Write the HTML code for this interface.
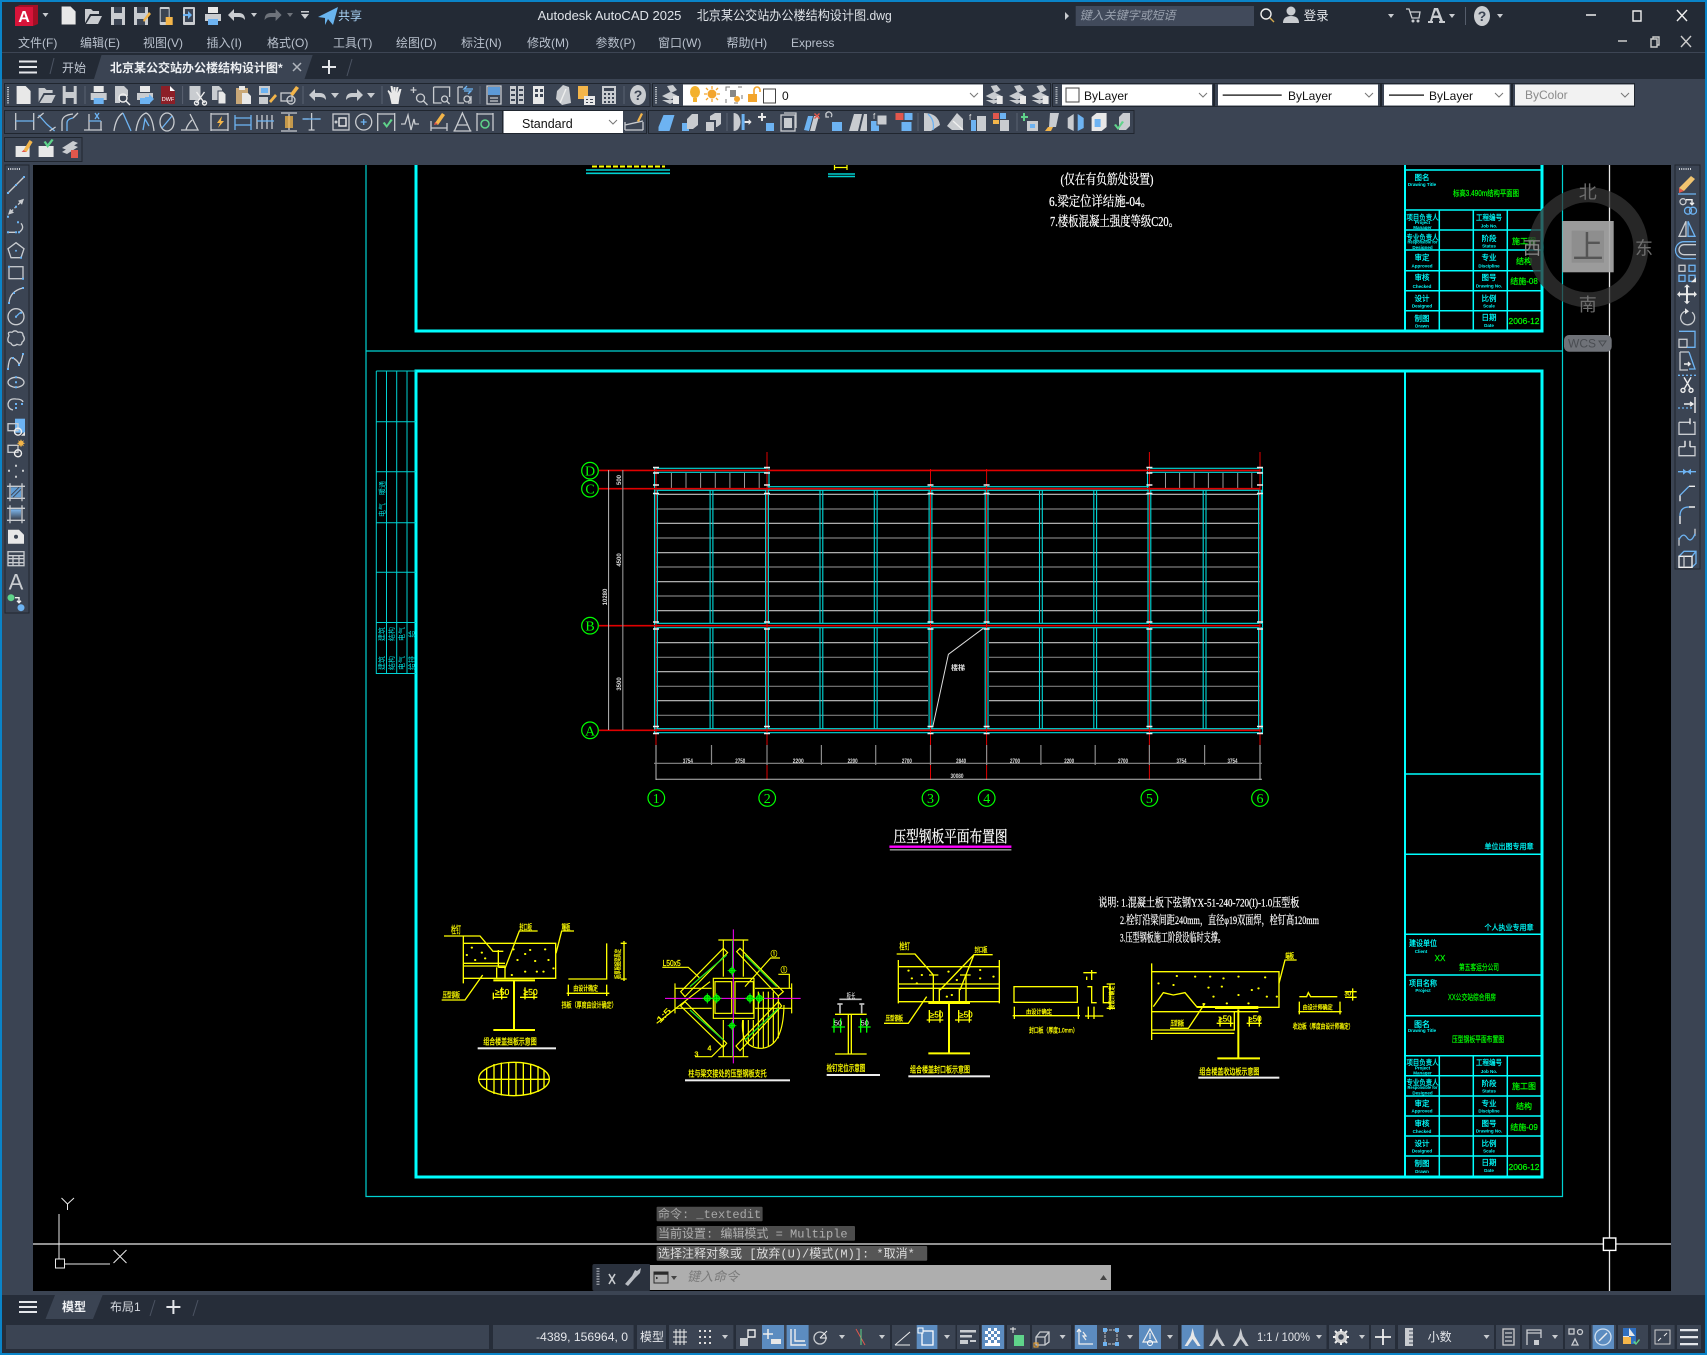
<!DOCTYPE html>
<html><head><meta charset="utf-8"><title>AutoCAD</title>
<style>
html,body{margin:0;padding:0;background:#000;width:1707px;height:1355px;overflow:hidden}
svg{display:block}
text{font-family:"Liberation Sans","Noto Sans CJK SC",sans-serif}
.mn{font-family:"Liberation Mono","Noto Sans CJK SC",monospace;font-size:12px}
.sf{font-family:"Liberation Serif","Noto Serif CJK SC",serif}
.f{fill:#c9ccd0}.w{fill:#e8e8e8}.bl{fill:#6db3f2}.o{fill:#f3b54a}.d{fill:#3b4453}.rd{fill:#e2574c}.gn{fill:#5fd38a}
.l{fill:none;stroke:#c9ccd0;stroke-width:1.3}.lb{fill:none;stroke:#6db3f2;stroke-width:1.3}.lw{fill:none;stroke:#eee;stroke-width:1.4}
.tb{fill:#3b4453;stroke:#20262f;stroke-width:1}
.mu{font-size:12px;fill:#b9c1cd}
.tt{fill:#0ff;font-size:7.5px;text-anchor:middle;stroke:#0ff;stroke-width:.2}
.te{fill:#0ff;font-size:4.5px;text-anchor:middle;font-weight:bold}
.tg{fill:#0f0;font-size:8px;text-anchor:middle;stroke:#0f0;stroke-width:.2}
.y{fill:#ff0;stroke:#ff0;stroke-width:.7}
.ys{fill:none;stroke:#ff0;stroke-width:4}
.dm{fill:#ddd;font-size:6px;text-anchor:middle;font-weight:bold}
.grn{fill:none;stroke:#0f0;stroke-width:1.2}
.gt{fill:#0f0;font-size:14px;text-anchor:middle}
.nt{stroke:#fff;stroke-width:.25}
</style></head>
<body>
<svg xmlns="http://www.w3.org/2000/svg" width="1707" height="1355" viewBox="0 0 1707 1355">
<defs>
<g id="new"><path class="w" d="M-7-9h9l5 5v13H-7z"/></g>
<g id="open"><path class="f" d="M-8-7h6l2 2h6v3H-3l-5 9zM-2 0H9L5 8H-7z"/></g>
<g id="save"><rect class="f" x="-7" y="-9" width="14" height="18"/><rect class="d" x="-4" y="-9" width="8" height="6"/><rect class="d" x="-4" y="3" width="8" height="6"/></g>
<g id="sas"><use href="#save"/><path class="o" d="M2 4L8-4l2 2-7 8z"/></g>
<g id="pho"><rect class="f" x="-6" y="-9" width="10" height="18" rx="1"/><rect class="d" x="-5" y="-7" width="8" height="13"/><path class="o" d="M0 1h7v8H0z"/></g>
<g id="pho2"><rect class="f" x="-6" y="-9" width="12" height="18" rx="1"/><rect class="d" x="-4" y="-7" width="8" height="13"/><path class="bl" d="M-6-2h5v-3l4 4-4 4V0h-5z"/></g>
<g id="prt"><rect class="w" x="-5" y="-9" width="10" height="6"/><rect class="f" x="-8" y="-2" width="16" height="7"/><rect class="bl" x="-5" y="3" width="10" height="6"/></g>
<g id="prv"><path class="f" d="M-7-9h9l4 4v6H-7z M-7 1h5v7h-5z"/><circle class="lw" cx="1" cy="3" r="4"/><path class="lw" d="M4 6l4 4"/></g>
<g id="pub"><use href="#prt"/><path class="bl" d="M0 2h4v-3l5 5-5 5V6H0z"/></g>
<g id="dwf"><path fill="#8c1f27" d="M-7-9h9l5 5v13H-7z"/><path fill="#fff" d="M2-9l5 5H2z"/><text x="0" y="6" font-size="5.5" fill="#fff" text-anchor="middle">DWF</text></g>
<g id="cut"><rect class="f" x="-8" y="-9" width="11" height="14"/><path class="lw" d="M-1-3L7 8M7-3L-1 8"/><circle class="lw" cx="-1" cy="8" r="2"/><circle class="lw" cx="7" cy="8" r="2"/></g>
<g id="cpy"><path class="f" d="M-7-9h7l3 3v11H-7z"/><path class="w" d="M-1-4h5l3 3v10H-1z" stroke="#3b4453"/></g>
<g id="pst"><path fill="#c9a878" d="M-7-7h12v16H-7z"/><rect class="w" x="-4" y="-9" width="6" height="4"/><path class="w" d="M-1-2h6l3 3v8H-1z"/></g>
<g id="mat"><rect class="f" x="-8" y="-9" width="11" height="9"/><rect class="bl" x="-6" y="-7" width="7" height="5"/><path class="f" d="M-8 2h9v7h-9z"/><path class="o" d="M2 6L8-1l2 2-6 7z"/></g>
<g id="mp"><rect class="l" x="-8" y="-2" width="11" height="8"/><circle class="l" cx="2" cy="5" r="4"/><path class="o" d="M1-1L7-9l3 2-6 8z"/></g>
<g id="und"><path class="f" d="M-9 0l6-6v4h5q6 0 6 7-2-3-6-3h-5V6z"/></g>
<g id="red"><path class="f" d="M9 0L3-6v4h-5q-6 0-6 7 2-3 6-3h5V6z"/></g>
<path id="dn" fill="#c9ccd0" d="M-4-2h8l-4 5z"/>
<path id="dnn" fill="#c9ccd0" d="M-3-2h6l-3 4z"/>
<g id="pan"><path class="w" d="M-6 0l-2-4 1-1 3 3-1-7h2l1 5V-8h2v5l1-5h2l-1 6 2-4h2l-2 8-1 7h-7z"/></g>
<g id="zp"><path class="l" d="M-8-5h6M-5-8v6"/><circle class="l" cx="2" cy="3" r="4"/><path class="l" d="M5 6l4 4"/></g>
<g id="zw"><path class="l" d="M-8-8H8V2M-8-8V8H0"/><circle class="l" cx="3" cy="4" r="3"/><path class="l" d="M5 6l3 3"/></g>
<g id="zb"><path class="l" d="M-7-8h5M-7-8V8h6M6 1v7h-3"/><path class="lb" d="M8-6H-1l3-3M-1-4h7l-3 3"/><circle class="l" cx="2" cy="4" r="3"/></g>
<g id="prop"><rect x="-6" y="-8" width="12" height="8" fill="#5c9ad8"/><rect class="l" x="-7" y="-9" width="14" height="18"/><path class="l" d="M-4 3H4M-4 6H4"/></g>
<g id="dc"><path class="f" d="M-7-9H-1V9H-7zM1-9H7V9H1z"/><path class="d" d="M-6-6h4v2h-4zM-6-1h4v2h-4zM-6 4h4v2h-4zM2-6h4v2H2zM2-1h4v2H2zM2 4h4v2H2z"/></g>
<g id="tp"><path class="w" d="M-7-9H4v18H-7z"/><path class="d" d="M-5-6h3v3h-3zM0-6h3v3H0zM-5-1h3v3h-3zM0-1h3v3H0z"/></g>
<g id="ss"><path class="f" d="M-6-4L0-10l6 2L8 8-1 10-7 4z"/><path class="lw" d="M-3 8L3-6"/></g>
<g id="mk"><path class="o" d="M-8-9H2V4H-8z"/><rect class="w" x="-2" y="1" width="11" height="9"/><path class="d" d="M0 4h2v1H0zM4 4h3v1H4zM0 7h2v1H0zM4 7h3v1H4z"/></g>
<g id="calc"><rect class="f" x="-7" y="-9" width="14" height="18"/><path class="d" d="M-5-7H5v3H-5zM-5-2h2v2h-2zM-1-2h2v2h-2zM3-2h2v2H3zM-5 2h2v2h-2zM-1 2h2v2h-2zM3 2h2v2H3zM-5 6h2v2h-2zM-1 6h2v2h-2zM3 6h2v2H3z"/></g>
<g id="q"><ellipse class="f" cx="0" cy="0" rx="8" ry="10"/><text x="0" y="5" font-size="14" font-weight="bold" text-anchor="middle" fill="#3b4453">?</text></g>
<g id="lyr"><path class="f" d="M-8 1L0-3l8 4-8 4zM-8 5l8 4 8-4"/><path class="f" d="M-3-9l6-1 4 5-6 3z"/><rect class="w" x="3" y="1" width="6" height="8"/></g>
<g id="d1"><path class="l" d="M-9-9V8M9-9V8"/><path class="lb" d="M-9-1H9"/></g>
<g id="d2"><path class="lb" d="M-8-7L0 2M8 9L0 2"/><path class="l" d="M-9-4L-3-9M3 9L9 5"/></g>
<g id="d3"><path class="l" d="M-8 9V0Q-8-7 3-8"/><path class="lb" d="M-3 9V1Q-3-3 3-4"/><path class="l" d="M8-9L3-4"/></g>
<g id="d4"><path class="l" d="M-9 8H9M-4 8V-8M8 8V-1"/><path class="lb" d="M-4-1H8M2-9l4 6M6-9l-4 6"/></g>
<g id="d5"><path class="l" d="M-8 9Q-6-5 1-9"/><path class="lb" d="M1-9L9 9"/></g>
<g id="d6"><path class="l" d="M-9 9Q-7-6 1-9Q7-7 9 9"/><path class="lb" d="M-2 8L0-3 4 4"/></g>
<g id="d7"><ellipse class="l" cx="0" cy="0" rx="7" ry="9"/><path class="lb" d="M-5 6L5-6"/></g>
<g id="d8"><path class="l" d="M-9 8H8L0-8M-4 8Q-3 3 2-2"/></g>
<g id="d9"><path class="l" d="M-9-9V9M8-9V9M-9-8H8M-9 8H8"/><path class="o" d="M2-6L-3 1h3L-2 6 4-1H1z"/></g>
<g id="d10"><path class="lb" d="M-8-7V8M8-7V8M-8-4H8"/><path class="lb" d="M-8 3H8"/></g>
<g id="d11"><path class="l" d="M-9-7V7M-4-7V7M1-7V7M6-7V7"/><path class="lb" d="M-9-1H8"/></g>
<g id="d12"><path class="l" d="M-8-9H8M-8 9H8M0-8V8"/><path class="o" d="M-4-6H4V6H-4z" opacity=".75"/></g>
<g id="d13"><path class="l" d="M-9-3H-3M3-3H9M0-9V8M-3 8H3"/><path class="lb" d="M-9-3h18"/></g>
<g id="d14"><rect class="l" x="-8" y="-8" width="16" height="16"/><rect class="lw" x="-2" y="-4" width="7" height="8"/><circle class="f" cx="-5" cy="0" r="1.5"/></g>
<g id="d15"><circle class="l" cx="0" cy="0" r="8"/><path class="lb" d="M-3 0H3M0-3V3"/></g>
<g id="d16"><path class="l" d="M-9-9V9M8-9V9M-9-8H8"/><path class="gn" d="M-4 1l2-1 2 3 4-6 2 1-6 8z"/></g>
<g id="d17"><path class="l" d="M-9 2H-5L-2-7 1 8 4-3 5 2H9"/></g>
<g id="d18"><path class="l" d="M-8-1V9M8 1V9M-8 6H8"/><path class="o" d="M-4 1L3-9l3 2-7 10z"/><path class="rd" d="M-5 3l1-3 3 2z"/></g>
<g id="d19"><path class="l" d="M-8 9L0-9 8 9M-5 3H5M-9 9H9"/></g>
<g id="d20"><path class="l" d="M-8-9V9M8-9V9M-8-8H8"/><circle fill="none" stroke="#5fd38a" stroke-width="1.5" cx="0" cy="2" r="4"/></g>
<g id="d21"><path class="l" d="M-9 8H9M-9 8V0M9 8V0M-9 3L9-1"/><path class="o" d="M3-1L7-9l2 1-4 8z"/></g>
<g id="m1"><path class="bl" d="M-8 5L-3-7H8L3 9H-8z"/></g>
<g id="m2"><path class="bl" d="M-8 1h7v8H-8z"/><path class="f" d="M-3-3L2-8H8V3L3 7H-3z"/></g>
<g id="m3"><path class="f" d="M-3-6L2-9H8V2L4 5H-3z"/><path class="d" d="M-5-2H3V7H-5z"/><path class="f" d="M-7 0H1V9H-7z"/></g>
<g id="m4"><path class="f" d="M-8-9Q-2-9-1 0-2 9-8 9z"/><path class="bl" d="M0-8H3V8H0z"/><path class="w" d="M3-1H7V-3L10 0 7 3V1H3z"/></g>
<g id="m5"><path class="w" d="M-4-9h2v3h3v2h-3v3h-2v-3H-7v-2h3z"/><rect class="bl" x="1" y="1" width="8" height="8"/></g>
<g id="m6"><rect class="l" x="-7" y="-7" width="14" height="16"/><rect class="f" x="-4" y="-4" width="8" height="10"/><path class="l" d="M-4-9H8V6"/></g>
<g id="m7"><path class="bl" d="M-8 8L-4-6H1L-3 9z"/><path class="f" d="M-2 9L2-6H7L3 9z"/><path class="rd" d="M3-9l2 2 2-2 1 1-2 2 2 2-1 1-2-2-2 2-1-1 2-2-2-2z"/></g>
<g id="m8"><path class="l" d="M-8-6A3 3 0 1 1-3-5M-8-9v4h3"/><rect class="bl" x="-2" y="0" width="10" height="9"/></g>
<g id="m9"><path class="f" d="M-9 9L-4-8H4L0 9z"/><path class="f" d="M2 9L6-8H9V9z"/></g>
<g id="m10"><path class="bl" d="M-9-1h8V9h-8z"/><path class="f" d="M-3-7h10V3H-3z" stroke="#3b4453"/><text x="-7" y="-3" font-size="8" fill="#ddd">f</text></g>
<g id="m11"><rect x="-8" y="-9" width="8" height="7" fill="#e2574c"/><rect class="bl" x="1" y="-9" width="8" height="7"/><rect class="bl" x="-2" y="0" width="10" height="9"/></g>
<g id="m12"><path class="f" d="M-8-9Q6-9 8 3L-1 9H-8z"/><path class="lb" d="M-4-8Q3-2 1 8"/></g>
<g id="m13"><path class="f" d="M-8 4L2-9 8-3V8H-3z"/><path class="lw" d="M-2-1L8 8"/></g>
<g id="m14"><text x="-9" y="-2" font-size="8" fill="#ddd">f</text><rect class="bl" x="-7" y="-2" width="5" height="11"/><path class="f" d="M-1-6H8V9H-1z"/></g>
<g id="m15"><rect x="-8" y="-9" width="6" height="6" fill="#e2574c"/><rect class="bl" x="-1" y="-9" width="6" height="6"/><rect class="o" x="-8" y="-2" width="6" height="4"/><path class="f" d="M-1-2H8V9H-1z"/></g>
<g id="m16"><path class="gn" d="M-9-6h2v-3h2v3h3v2H-5v3h-2v-3h-2z"/><rect class="f" x="-3" y="-1" width="11" height="10"/><rect class="bl" x="0" y="2" width="5" height="4"/></g>
<g id="m17"><path class="f" d="M-3-9H6L3 5H-4z"/><path class="o" d="M-5 5H0L-2 9H-8z"/></g>
<g id="m18"><path class="f" d="M-8-4L-2-8V9L-8 6z"/><path class="bl" d="M2-8L8-4V6L2 9z"/></g>
<g id="m19"><path class="w" d="M-7-5L-2-9H8V5L3 9H-7z"/><rect class="bl" x="-4" y="-3" width="6" height="8"/></g>
<g id="m20"><path class="f" d="M-3-5L1-9H8V4L4 8H-3z"/><path class="gn" d="M-8 3l2-1 2 3 4-6 2 1-6 8z"/></g>
<g id="r1"><path d="M-8 3L4-9l4 3L-3 6z" fill="#f0c470"/><path class="rd" d="M-8 3l5 3-5 2z"/><path class="lb" d="M-9 9H9" /></g>
<g id="r2"><circle class="l" cx="-4" cy="-5" r="3"/><path class="lw" d="M-1-7H5V-2M3-4l2 2 2-2"/><circle class="lb" cx="1" cy="4" r="3.5"/><circle class="lb" cx="6" cy="4" r="3.5"/></g>
<g id="r3"><path class="l" d="M-1-8L-8 7H-1z"/><path class="lb" d="M1-8L8 7H1z"/></g>
<g id="r4"><path class="l" d="M9-6H-3A5 5 0 0 0-3 4H9"/><path class="lb" d="M9-9H-3A8 8 0 0 0-3 8H9"/></g>
<g id="r5"><rect class="l" x="-8" y="-8" width="6" height="6"/><rect class="lb" x="2" y="-8" width="6" height="6"/><rect class="lb" x="-8" y="2" width="6" height="6"/><rect class="lb" x="2" y="2" width="6" height="6"/><path class="w" d="M4 9l5-5v5z"/></g>
<g id="r6"><path class="w" d="M0-10l3 3H1v6h6v-2l3 3-3 3v-2H1v6h2l-3 3-3-3h2V1h-6v2l-3-3 3-3v2h6v-6h-2z"/></g>
<g id="r7"><path class="l" d="M5-5A7 7 0 1 1-2-6"/><path class="w" d="M-2-9l4 3-4 3z"/></g>
<g id="r8"><rect class="l" x="-8" y="0" width="8" height="8"/><path class="lb" d="M-8-8H8V8H0"/></g>
<g id="r9"><path class="l" d="M-7-9V9H1M-7-9H2"/><path class="lb" d="M2-9L8 8H2"/><path class="lw" d="M-3 3H3M1 1l2 2-2 2"/></g>
<g id="r10"><path class="lb" stroke-dasharray="2 2" d="M-9-8H9"/><path class="lw" d="M-3-6L4 6M4-6L-3 6"/><circle class="lw" cx="-4" cy="7" r="2"/><circle class="lw" cx="4" cy="7" r="2"/></g>
<g id="r11"><path class="lw" d="M8-8V8"/><path class="lb" stroke-dasharray="2 2" d="M-9 3H6"/><path class="lw" d="M-3-1H6M3-3L6-1 3 1"/></g>
<g id="r12"><path class="l" d="M-8-5H3M6-5H8V7H-8V-5"/><path class="lw" d="M3-9V-3"/></g>
<g id="r13"><path class="l" d="M-8-2H-2M3-2H8V7H-8V-2"/><path class="lw" d="M-2-8V-2M3-8V-2"/></g>
<g id="r14"><path class="lb" d="M-9 0H9"/><path class="bl" d="M-4-3L0 0-4 3zM4-3L0 0 4 3z"/></g>
<g id="r15"><path class="lw" d="M-7 8V2M2-7H8"/><path class="lb" d="M-7 2L2-7"/></g>
<g id="r16"><path class="lw" d="M-7 9V1M2-8H8"/><path class="lb" d="M-7 1Q-7-8 2-8"/></g>
<g id="r17"><path class="l" d="M-8 9V1M8-8V-1"/><path class="lb" d="M-8 3Q-4-5 0 1T8-3"/></g>
<g id="r18"><path class="lb" d="M-8-3L-3-8H9V4L5 8M9-8L5-3"/><rect class="lw" x="-8" y="-3" width="13" height="11"/><path class="l" d="M-3-3V8"/></g>
<g id="l1"><path class="l" d="M-8 8L8-8"/><path class="bl" d="M-9 7h2v2h-2zM7-9h2v2h-2zM-1-1h2v2h-2z"/></g>
<g id="l2"><path class="f" d="M-8 8L-6 2-2 6zM8-8L2-6 6-2z"/><path class="l" stroke-dasharray="3 2" d="M-5 5L5-5"/><path class="bl" d="M-9 9h2v2h-2zM-1-1h2v2h-2z"/></g>
<g id="l3"><path class="l" d="M-8 4H-1M5-5Q9 0 3 4"/><path class="bl" d="M-9 3h2v2h-2zM-1 3h2v2h-2zM1-7h2v2H1zM2 3h2v2H2z"/></g>
<g id="l4"><path class="l" d="M0-8L8-2 5 7H-5L-8-2z"/><circle class="bl" cx="0" cy="0" r="1"/><path class="bl" d="M4 6h2v2H4z"/></g>
<g id="l5"><rect class="l" x="-7" y="-6" width="14" height="12"/><path class="bl" d="M-8-7h2v2h-2zM6 5h2v2H6z"/></g>
<g id="l6"><path class="l" d="M-7 8Q-6-4 7-7"/><path class="bl" d="M-8 7h2v2h-2zM-3-3h2v2h-2zM6-8h2v2H6z"/></g>
<g id="l7"><circle class="l" cx="0" cy="0" r="8"/><path class="lb" d="M0 0L4-4"/><path class="bl" d="M4-5h2v2H4zM-1-1h2v2h-2z"/></g>
<g id="l8"><path class="l" d="M-7-4Q-9-8-4-7-1-10 2-7 7-8 7-4 10 0 6 3 6 7 1 5-3 8-5 4-9 3-8-1z"/></g>
<g id="l9"><path class="l" d="M-8 8Q-7-5-3-3T3 3Q5 2 7-7"/><path class="bl" d="M-9 7h2v2h-2zM-4-4h2v2h-2zM2 3h2v2H2zM6-8h2v2H6z"/></g>
<g id="l10"><ellipse class="l" cx="0" cy="0" rx="8" ry="5"/><path class="bl" d="M-1-1h2v2h-2zM-1-6h2v2h-2zM-1 4h2v2h-2z"/></g>
<g id="l11"><path class="l" d="M-3 6Q-8 5-8 0-7-6 0-5 6-5 7-2"/><path class="bl" d="M-1-1h2v2h-2zM-1 3h2v2h-2zM5-1h2v2H5z"/></g>
<g id="l12"><rect class="bl" x="-1" y="-8" width="10" height="14"/><rect class="l" x="-8" y="-3" width="10" height="7"/><circle class="lw" cx="2" cy="5" r="3.5"/><path class="w" d="M5 9l4-4v4z"/></g>
<g id="l13"><rect class="l" x="-8" y="-3" width="10" height="7"/><circle class="lw" cx="2" cy="5" r="3.5"/><path class="o" d="M5-9l1 2 2-1-1 2 2 1-2 1 1 2-2-1-1 2-1-2-2 1 1-2-2-1 2-1-1-2 2 1z"/></g>
<g id="l14"><path class="f" d="M-1-6h2v2h-2zM-8-1h2v2h-2zM6-1h2v2H6zM-1 5h2v2h-2z"/></g>
<g id="l15"><path class="l" d="M-9-6H9M-9 6H9M-6-9V9M6-9V9"/><rect x="-5" y="-5" width="10" height="10" fill="#6db3f2" opacity=".8"/><path stroke="#3b4453" d="M-5 3L3-5M-3 5L5-3"/></g>
<g id="l16"><path class="l" d="M-9-6H9M-9 6H9M-6-9V9M6-9V9"/><linearGradient id="gr" x1="0" y1="0" x2="0" y2="1"><stop offset="0" stop-color="#7fb8ee"/><stop offset="1" stop-color="#3b4453"/></linearGradient><rect x="-5" y="-5" width="10" height="10" fill="url(#gr)"/></g>
<g id="l17"><path class="w" d="M-8-7H3L8-2V7H-8z"/><circle cx="0" cy="0" r="2" fill="#3b4453"/></g>
<g id="l18"><rect class="l" x="-8" y="-7" width="16" height="14"/><path class="l" d="M-8-3H8M-8 0H8M-8 4H8M-3-3V7M3-3V7"/></g>
<g id="l19"><text x="0" y="8" font-size="22" fill="#c9ccd0" text-anchor="middle">A</text></g>
<g id="l20"><circle class="gn" cx="-5" cy="-5" r="3.5"/><circle class="bl" cx="5" cy="5" r="3.5"/><path class="lw" d="M-1-5H3V0M1-2l2 2 2-2"/></g>
<path id="chev" fill="none" stroke="#777" stroke-width="1" d="M-4-2L0 2 4-2"/>
<g id="vp"><path d="M-1.4 490.3V623.3M1.4 490.3V623.3M-1.4 627.7V728.7M1.4 627.7V728.7"/></g>
<g id="tm"><path d="M-3 467.5H3M-3 473H3M-3 485H3M-3 493.5H3M-3 622H3M-3 629H3M-3 726.5H3M-3 733.5H3"/></g>
<g id="tm2"><path d="M-3 485H3M-3 493.5H3M-3 622H3M-3 629H3M-3 726.5H3M-3 733.5H3"/></g>
<g id="bo"><circle r="3" fill="#0a0" stroke="#0f0"/><path stroke="#0f0" d="M-5 0H5M0-5V5"/></g>
</defs>

<rect width="1707" height="1355" fill="#000"/>

<!-- ===== drawing ===== -->
<g fill="none">
<path stroke="#00d2d2" stroke-width="1.2" d="M366 165V1196.5H1562.5V165M366 351H1562.5"/>
<path stroke="#0ff" stroke-width="3" d="M416 165V331H1542V165M416 371H1542V1177H416z"/>
<path stroke="#0ff" stroke-width="2" d="M1405 165V331M1405 371V1177"/>
<path stroke="#0ff" stroke-width="1.5" d="M1405 170H1542M1405 210H1542M1405 230H1542M1405 250H1542M1405 270.7H1542M1405 290.7H1542M1405 310.7H1542M1439.3 210V331M1473.3 210V331M1507.3 210V331"/>
<path stroke="#0ff" stroke-width="1.5" d="M1405 774H1542M1405 854.3H1542M1405 934.3H1542M1405 975H1542M1405 1015.7H1542M1405 1055.7H1542M1405 1075.7H1542M1405 1096H1542M1405 1116H1542M1405 1136H1542M1405 1156H1542M1439.3 1055.7V1177M1473.3 1055.7V1177M1507.3 1055.7V1177"/>
<path stroke="#00d2d2" stroke-width="1" d="M376.3 371H416M376.3 371V673.5H416M386.5 371V673.5M396.7 371V673.5M407 371V673.5M376.3 421.7H416M376.3 471.7H416M376.3 522.7H416M376.3 572.3H416M376.3 622.5H416"/>
<path stroke="#00d0d0" stroke-width="1.6" d="M586 170H670M586 173.3H670M828 174H855M828 176.5H855"/>
<path stroke="#ff0" stroke-width="1.2" d="M834.5 165V170M847 165V170M835 167.5H847"/>
<path stroke="#ff0" stroke-width="2" stroke-dasharray="5 2" d="M592 166.5H665"/>
</g>
<g fill="#00d8d8" font-size="7">
<text transform="translate(384.5 488) rotate(-90)" text-anchor="middle">暖通</text>
<text transform="translate(384.5 510) rotate(-90)" text-anchor="middle">电气</text>
<text transform="translate(384 634) rotate(-90)" text-anchor="middle">建筑</text>
<text transform="translate(384 663) rotate(-90)" text-anchor="middle">建筑</text>
<text transform="translate(394 634) rotate(-90)" text-anchor="middle">结构</text>
<text transform="translate(394 663) rotate(-90)" text-anchor="middle">结构</text>
<text transform="translate(404 634) rotate(-90)" text-anchor="middle">电气</text>
<text transform="translate(404 663) rotate(-90)" text-anchor="middle">电气</text>
<text transform="translate(414 634) rotate(-90)" text-anchor="middle">给</text>
<text transform="translate(414 663) rotate(-90)" text-anchor="middle">给排</text>
</g>
<g fill="#fff" font-size="13.5">
<text x="1060.5" y="184" textLength="93" lengthAdjust="spacingAndGlyphs" class="sf nt">(仅在有负筋处设置)</text>
<text x="1049" y="206" textLength="103" lengthAdjust="spacingAndGlyphs" class="sf nt">6.梁定位详结施-04。</text>
<text x="1050" y="226" textLength="129" lengthAdjust="spacingAndGlyphs" class="sf nt">7.楼板混凝土强度等级C20。</text>
</g>

<!-- title block upper -->
<text class="tt" x="1422" y="180">图名</text><text class="te" x="1422" y="186">Drawing Title</text>
<text class="tg" x="1486" y="196" textLength="66" lengthAdjust="spacingAndGlyphs" style="font-size:8px">标高3.490m结构平面图</text>
<text class="tt" x="1422.5" y="220" textLength="32" lengthAdjust="spacingAndGlyphs">项目负责人</text><text class="te" x="1422.5" y="224">Project</text><text class="te" x="1422.5" y="229">Manager</text>
<text class="tt" x="1489" y="220" textLength="26" lengthAdjust="spacingAndGlyphs">工程编号</text><text class="te" x="1489" y="227.5">Job No.</text>
<text class="tt" x="1422.5" y="240" textLength="32" lengthAdjust="spacingAndGlyphs">专业负责人</text><text class="te" x="1422.5" y="243.5" textLength="30" lengthAdjust="spacingAndGlyphs">Responsible for</text><text class="te" x="1422.5" y="249">Designed</text>
<text class="tt" x="1489" y="241">阶段</text><text class="te" x="1489" y="247.5">Status</text><text class="tg" x="1524" y="244">施工图</text>
<text class="tt" x="1422" y="260">审定</text><text class="te" x="1422" y="267.5">Approved</text>
<text class="tt" x="1489" y="260">专业</text><text class="te" x="1489" y="267.5">Discipline</text><text class="tg" x="1524" y="264">结构</text>
<text class="tt" x="1422" y="280">审核</text><text class="te" x="1422" y="288">Checked</text>
<text class="tt" x="1489" y="280">图号</text><text class="te" x="1489" y="287.5">Drawing No.</text><text class="tg" x="1524" y="284">结施-08</text>
<text class="tt" x="1422" y="301">设计</text><text class="te" x="1422" y="307.5">Designed</text>
<text class="tt" x="1489" y="301">比例</text><text class="te" x="1489" y="307.5">Scale</text>
<text class="tt" x="1422" y="321">制图</text><text class="te" x="1422" y="327.5">Drawn</text>
<text class="tt" x="1489" y="320">日期</text><text class="te" x="1489" y="327">Date</text><text class="tg" x="1524" y="324" textLength="31" lengthAdjust="spacingAndGlyphs">2006-12</text>

<!-- title block lower -->
<text class="tt" x="1509" y="849" textLength="49" lengthAdjust="spacingAndGlyphs" style="text-anchor:middle">单位出图专用章</text>
<text class="tt" x="1509" y="930" textLength="49" lengthAdjust="spacingAndGlyphs">个人执业专用章</text>
<text class="tt" x="1423" y="946" style="font-size:8px" textLength="28" lengthAdjust="spacingAndGlyphs">建设单位</text><text class="te" x="1421" y="953">Client</text>
<text class="tg" x="1440" y="961">XX</text><text class="tg" x="1479" y="970" textLength="40" lengthAdjust="spacingAndGlyphs">第五客运分公司</text>
<text class="tt" x="1423" y="986" style="font-size:8px" textLength="28" lengthAdjust="spacingAndGlyphs">项目名称</text><text class="te" x="1423" y="992">Project</text>
<text class="tg" x="1472" y="1000" textLength="48" lengthAdjust="spacingAndGlyphs">XX公交站综合用房</text>
<text class="tt" x="1422" y="1027" style="font-size:8px">图名</text><text class="te" x="1422" y="1032">Drawing Title</text>
<text class="tg" x="1478" y="1042" textLength="52" lengthAdjust="spacingAndGlyphs">压型钢板平面布置图</text>
<text class="tt" x="1422.5" y="1065" textLength="32" lengthAdjust="spacingAndGlyphs">项目负责人</text><text class="te" x="1422.5" y="1069.5">Project</text><text class="te" x="1422.5" y="1074.5">Manager</text>
<text class="tt" x="1489" y="1065" textLength="26" lengthAdjust="spacingAndGlyphs">工程编号</text><text class="te" x="1489" y="1073">Job No.</text>
<text class="tt" x="1422.5" y="1085" textLength="32" lengthAdjust="spacingAndGlyphs">专业负责人</text><text class="te" x="1422.5" y="1089" textLength="30" lengthAdjust="spacingAndGlyphs">Responsible for</text><text class="te" x="1422.5" y="1094.5">Designed</text>
<text class="tt" x="1489" y="1086">阶段</text><text class="te" x="1489" y="1092.5">Status</text><text class="tg" x="1524" y="1089">施工图</text>
<text class="tt" x="1422" y="1106">审定</text><text class="te" x="1422" y="1112.5">Approved</text>
<text class="tt" x="1489" y="1106">专业</text><text class="te" x="1489" y="1112.5">Discipline</text><text class="tg" x="1524" y="1109">结构</text>
<text class="tt" x="1422" y="1126">审核</text><text class="te" x="1422" y="1133">Checked</text>
<text class="tt" x="1489" y="1126">图号</text><text class="te" x="1489" y="1132.5">Drawing No.</text><text class="tg" x="1524" y="1130">结施-09</text>
<text class="tt" x="1422" y="1146">设计</text><text class="te" x="1422" y="1152.5">Designed</text>
<text class="tt" x="1489" y="1146">比例</text><text class="te" x="1489" y="1152.5">Scale</text>
<text class="tt" x="1422" y="1166">制图</text><text class="te" x="1422" y="1173">Drawn</text>
<text class="tt" x="1489" y="1165">日期</text><text class="te" x="1489" y="1172">Date</text><text class="tg" x="1524" y="1170" textLength="31" lengthAdjust="spacingAndGlyphs">2006-12</text>

<!-- main plan -->
<g fill="none">
<path stroke="#c4c4c4" stroke-width="1.2" d="M656 494.3H1260M656 523.3H1260M656 552.7H1260M656 581.7H1260M656 610.7H1260M656 642.7H928M989 642.7H1260M656 671.7H928M989 671.7H1260M656 700.7H928M989 700.7H1260"/>
<path stroke="#7c7c7c" stroke-width="1.2" d="M656 509H1260M656 538H1260M656 567H1260M656 596H1260M656 657.3H928M989 657.3H1260M656 686.3H928M989 686.3H1260M656 715.3H928M989 715.3H1260"/>
<path stroke="#999" stroke-width="1" d="M671.4 473V488M686 473V488M700.6 473V488M715.3 473V488M729.9 473V488M744.5 473V488M759.2 473V488M1165.5 473V488M1179.6 473V488M1194.2 473V488M1208.4 473V488M1223 473V488M1237.7 473V488M1251.8 473V488"/>
<g stroke="#00dada" stroke-width="1.1">
<use href="#vp" x="656"/><use href="#vp" x="711.5"/><use href="#vp" x="767"/><use href="#vp" x="821.4"/><use href="#vp" x="875.7"/><use href="#vp" x="930.5"/><use href="#vp" x="986.6"/><use href="#vp" x="1040.9"/><use href="#vp" x="1095.2"/><use href="#vp" x="1149.4"/><use href="#vp" x="1204.6"/><use href="#vp" x="1260"/>
<path d="M654 490.3H1262.5M654 623.3H1262.5M654 627.7H1262.5M654 728.7H1262.5M654 732.7H1262.5M767 486.7H1149M654.5 468.3H768M654.5 472.3H768M1149 468.3H1262.5M1149 472.3H1262.5M654.5 468V490M769 468V490M1147.5 468V490M1262.5 468V490M654.5 490V733M1262.5 490V733"/>
</g>
<g stroke="#e00000">
<path stroke-width="1" d="M656 467V780M767 452V780M930.5 469V780M986.6 469V780M1149.4 452V780M1260 452V780"/>
<path stroke-width="1.6" d="M599 470.4H1260M599 488.7H1260M599 625.7H1260M599 730.3H1260"/>
</g>
<g stroke="#eee" stroke-width="1.4">
<use href="#tm" x="656"/><use href="#tm" x="767"/><use href="#tm2" x="930.5"/><use href="#tm2" x="986.6"/><use href="#tm" x="1149.4"/><use href="#tm" x="1260"/>
</g>
<path stroke="#ddd" d="M932.8 726.7L948.4 654.3L983.3 628.3"/>
<path stroke="#bbb" d="M608.6 470V730M656 745V780M1260 745V780M656 779.3H1262"/>
<path stroke="#8a8a8a" stroke-width="1.2" d="M622.8 470V730M654 763.3H1262M711.5 745V765M767 745V765M821.4 745V765M875.7 745V765M930.5 745V765M986.6 745V765M1040.9 745V765M1095.2 745V765M1149.4 745V765M1204.6 745V765"/>
<g class="grn">
<ellipse cx="590" cy="470.7" rx="8.3" ry="8.3"/><ellipse cx="590" cy="488.7" rx="8.3" ry="8.3"/><ellipse cx="590" cy="625.7" rx="8.3" ry="8.3"/><ellipse cx="590" cy="730.3" rx="8.3" ry="8.3"/>
<ellipse cx="656.3" cy="798" rx="8.3" ry="8.3"/><ellipse cx="767.2" cy="798" rx="8.3" ry="8.3"/><ellipse cx="930.5" cy="798" rx="8.3" ry="8.3"/><ellipse cx="986.7" cy="798" rx="8.3" ry="8.3"/><ellipse cx="1149.4" cy="798" rx="8.3" ry="8.3"/><ellipse cx="1260" cy="798" rx="8.3" ry="8.3"/>
</g>
</g>
<g>
<text class="gt sf" x="590" y="475.7">D</text><text class="gt sf" x="590" y="493.7">C</text><text class="gt sf" x="590" y="630.7">B</text><text class="gt sf" x="590" y="735.3">A</text>
<text class="gt sf" x="656.3" y="803">1</text><text class="gt sf" x="767.2" y="803">2</text><text class="gt sf" x="930.5" y="803">3</text><text class="gt sf" x="986.7" y="803">4</text><text class="gt sf" x="1149.4" y="803">5</text><text class="gt sf" x="1260" y="803">6</text>
</g>
<text class="dm" x="687.9" y="763" textLength="10" lengthAdjust="spacingAndGlyphs">3754</text><text class="dm" x="740.3" y="763" textLength="10" lengthAdjust="spacingAndGlyphs">2750</text><text class="dm" x="798.3" y="763" textLength="11" lengthAdjust="spacingAndGlyphs">2200</text><text class="dm" x="852.6" y="763" textLength="10" lengthAdjust="spacingAndGlyphs">2200</text><text class="dm" x="906.9" y="763" textLength="10" lengthAdjust="spacingAndGlyphs">2700</text><text class="dm" x="961.1" y="763" textLength="10" lengthAdjust="spacingAndGlyphs">2840</text><text class="dm" x="1015" y="763" textLength="10" lengthAdjust="spacingAndGlyphs">2700</text><text class="dm" x="1069.2" y="763" textLength="10" lengthAdjust="spacingAndGlyphs">2200</text><text class="dm" x="1123" y="763" textLength="10" lengthAdjust="spacingAndGlyphs">2700</text><text class="dm" x="1181.5" y="763" textLength="10" lengthAdjust="spacingAndGlyphs">3754</text><text class="dm" x="1232.5" y="763" textLength="10" lengthAdjust="spacingAndGlyphs">3754</text>
<text class="dm" x="957" y="778" textLength="13" lengthAdjust="spacingAndGlyphs">30080</text>
<text class="dm" transform="translate(621 480) rotate(-90)">500</text>
<text class="dm" transform="translate(621 560) rotate(-90)">4500</text>
<text class="dm" transform="translate(607 597) rotate(-90)">10280</text>
<text class="dm" transform="translate(621 684) rotate(-90)">3500</text>
<text class="dm" x="958" y="670" style="font-size:7px">楼梯</text>
<text class="sf nt" x="893.5" y="842" fill="#fff" font-size="16" textLength="114" lengthAdjust="spacingAndGlyphs">压型钢板平面布置图</text>
<rect x="889.4" y="845.5" width="122" height="2.4" fill="#f0f"/>
<rect x="889.8" y="849" width="121.6" height="1.6" fill="#888"/>

<!-- details group A -->
<g transform="translate(430 880) scale(.33333)">
<g class="ys">
<path d="M100 190H377V295H100zM100 250H225M100 258H225M100 168V310M42 168H150L190 215M100 295H190"/>
<path stroke-width="6" d="M190 301H315M252 301V450M190 450H315"/>
<path d="M205 210V262M190 214H220M205 262H225V295M200 262V295"/>
<path d="M323 153H268L225 265M432 153H395L378 220M35 360H105L158 285"/>
<path d="M190 352H232M190 338V358M215 322V358M270 352H322M285 322V358M312 338V358"/>
<path d="M530 190V297H415"/>
<path d="M582 183V303M572 190H590M572 297H590M410 340H538M415 314V348M530 314V348"/>
<ellipse cx="252" cy="597" rx="106" ry="50"/>
<path d="M170 563V630M192 552V642M214 548V646M236 547V648M258 547V648M280 547V647M302 551V644M324 558V636M342 570V622M148 598H358"/>
</g>
<path stroke="#ff0" stroke-width="6" stroke-linecap="round" fill="none" d="M125 203h1M155 218h1M135 240h1M165 235h1M250 208h1M285 222h1M315 243h1M345 208h1M355 240h1M262 240h1M285 275h1M320 275h1M245 285h1M370 265h1M110 225h1M340 275h1M300 210h1"/>
<g class="y" font-size="30">
<text x="63" y="160" textLength="30" lengthAdjust="spacingAndGlyphs">栓钉</text>
<text x="268" y="148" textLength="38" lengthAdjust="spacingAndGlyphs" style="font-size:22px">封口板</text>
<text x="395" y="148" textLength="26" lengthAdjust="spacingAndGlyphs" style="font-size:22px">端板</text>
<text x="38" y="352" textLength="52" lengthAdjust="spacingAndGlyphs" style="font-size:22px">压型钢板</text>
<text x="195" y="345" style="font-size:26px">≥50</text><text x="280" y="345" style="font-size:26px">≥50</text>
<text x="430" y="332" textLength="74" lengthAdjust="spacingAndGlyphs" style="font-size:20px">由设计确定</text>
<text transform="translate(570 297) rotate(-90)" textLength="90" lengthAdjust="spacingAndGlyphs" style="font-size:20px">板厚根据梁高定</text>
<text x="395" y="383" textLength="165" lengthAdjust="spacingAndGlyphs" style="font-size:22px">挡板（厚度由设计确定）</text>
<text x="160" y="494" textLength="160" lengthAdjust="spacingAndGlyphs" style="font-size:26px">组合楼盖挡板示意图</text>
</g>
<rect x="143" y="502" width="235" height="6" fill="#eee"/>

<!-- node -->
<g class="ys" style="stroke-width:3.5">
<rect x="850" y="295" width="122" height="120"/><rect x="855" y="305" width="50" height="95"/><rect x="915" y="305" width="55" height="95"/>
<path d="M865 180H955M880 180V290M940 180V290M865 530H955M880 420V530M940 420V530"/>
<path d="M735 325H845M735 385H845M975 325H1085M975 385H1085M735 310V400M1085 310V400"/>
<path d="M880 205L752 335L765 350L893 218ZM930 205L1060 335L1045 348L920 215ZM765 365L890 490L880 502L752 378ZM1055 378L930 512L918 498L1045 365Z"/>
<path d="M938 420Q930 505 995 505Q1060 500 1062 375M955 420V490M970 420V498M985 335V505M1000 335V505M1015 335V500M1030 335V490M1045 345V475"/>
<path d="M697 262H775L808 293M1050 234H1022L945 320M1045 283H1078V325M680 430L840 305"/>
<path d="M795 530H845L880 495"/>
</g>
<g fill="none" stroke="#22dd22" stroke-width="4"><path d="M780 320L890 225M945 225L1040 320M780 390L880 480M945 480L1045 385M908 180V290M908 420V530"/></g>
<g stroke="#f0f" stroke-width="3" fill="none"><path d="M910 148V550M705 355H1112"/></g>
<g transform="translate(832 355) scale(3)"><use href="#bo"/></g><g transform="translate(860 355) scale(3)"><use href="#bo"/></g><g transform="translate(960 355) scale(3)"><use href="#bo"/></g><g transform="translate(988 355) scale(3)"><use href="#bo"/></g><g transform="translate(906 272) scale(2.6)"><use href="#bo"/></g><g transform="translate(906 437) scale(2.6)"><use href="#bo"/></g>
<g class="y">
<text x="698" y="258" textLength="54" lengthAdjust="spacingAndGlyphs" font-size="24">L50x5</text>
<text x="1022" y="228" font-size="20">①</text><text x="1052" y="276" font-size="20">①</text>
<text transform="translate(690 430) rotate(-45)" font-size="26" textLength="50" lengthAdjust="spacingAndGlyphs">1:5</text>
<text x="793" y="530" font-size="22">3</text><text x="832" y="512" font-size="22">4</text>
<text x="775" y="590" textLength="235" lengthAdjust="spacingAndGlyphs" font-size="26">柱与梁交接处的压型钢板支托</text>
<text x="1190" y="573" textLength="116" lengthAdjust="spacingAndGlyphs" font-size="26">栓钉定位示意图</text>
</g>
<rect x="765" y="598" width="315" height="6" fill="#eee"/>

<!-- stud -->
<g class="ys"><path d="M1215 403H1310M1255 405V520M1264 405V520M1215 522H1310"/></g>
<path stroke="#bbb" stroke-width="5" fill="none" d="M1230 372V400M1295 372V400M1222 372H1238M1288 372H1303M1228 358H1295"/>
<path fill="none" stroke="#0f0" stroke-width="4" d="M1205 441H1245M1212 415V458M1232 415V458M1285 441H1322M1292 415V458M1310 415V458"/>
<text x="1250" y="356" fill="#eee" font-size="22" textLength="26" lengthAdjust="spacingAndGlyphs">板长</text>
<text x="1212" y="437" fill="#eee" font-size="22">50</text><text x="1292" y="437" fill="#eee" font-size="22">50</text>
<rect x="1190" y="582" width="160" height="6" fill="#eee"/>
</g>

<!-- details group B -->
<g transform="translate(880 880) scale(.33333)">
<g class="ys">
<path d="M55 260H358M55 312H358M55 325H358M55 240V370M358 240V370M55 365H358M50 222H105L160 285M12 430H85L140 350"/>
<path stroke-width="6" d="M145 369H270M207 369V520M145 520H270"/>
<path d="M160 285V365M178 325V365M258 285V365M238 325V365M147 285H175M240 285H272"/>
<path d="M338 224H282L180 330M282 224L240 330"/>
<path d="M140 420H190M148 390V428M180 390V428M225 420H275M236 390V428M268 390V428"/>
<rect x="402" y="320" width="190" height="47"/>
<path d="M398 407H600M403 380V417M595 380V417"/>
<path d="M622 320H635V368H650M685 320H670V368H690M690 310V390M680 312H705M680 385H705M620 300V290M635 300V270M610 278H650"/>
<path d="M625 380V417M642 380V417M615 408H670"/>
<path d="M815 275H1197V382H950M815 250V480M820 380L850 338L880 345L915 338L950 380H1135M815 395H1135M815 450H1063V395M815 460H1063"/>
<path stroke-width="6" d="M1005 384H1135M1075 388V535M1012 535H1140"/>
<path d="M1250 240H1215L1197 310M870 445H925L975 370"/>
<path d="M1010 430H1060M1020 410V440M1052 410V440M1100 430H1145M1108 410V440M1138 410V440"/>
<path d="M1258 350H1280L1285 338L1292 350H1372M1255 395H1385M1258 365V403M1380 365V403M1395 335H1430M1395 352H1430M1418 325V362"/>
</g>
<path stroke="#ff0" stroke-width="6" stroke-linecap="round" fill="none" d="M85 272h1M125 285h1M95 295h1M205 275h1M300 270h1M340 290h1M300 295h1M230 300h1M200 350h1M215 345h1M110 310h1M835 310h1M890 288h1M945 290h1M990 290h1M1030 295h1M1075 290h1M1155 292h1M985 323h1M1025 320h1M1075 345h1M1115 330h1M1160 350h1M1000 350h1M1040 370h1M1135 325h1M1190 350h1M880 315h1M1105 370h1M970 372h1"/>
<g class="y">
<text x="58" y="208" textLength="32" lengthAdjust="spacingAndGlyphs" font-size="28">栓钉</text>
<text x="284" y="216" textLength="38" lengthAdjust="spacingAndGlyphs" font-size="20">封口板</text>
<text x="17" y="422" textLength="52" lengthAdjust="spacingAndGlyphs" font-size="20">压型钢板</text>
<text x="150" y="412" font-size="24">≥50</text><text x="238" y="412" font-size="24">≥50</text>
<text x="438" y="402" textLength="78" lengthAdjust="spacingAndGlyphs" font-size="18">由设计确定</text>
<text x="447" y="458" textLength="146" lengthAdjust="spacingAndGlyphs" font-size="20">封口板（厚度1.0mm）</text>
<text x="90" y="578" textLength="180" lengthAdjust="spacingAndGlyphs" font-size="26">组合楼盖封口板示意图</text>
<text x="958" y="584" textLength="180" lengthAdjust="spacingAndGlyphs" font-size="26">组合楼盖收边板示意图</text>
<text x="1216" y="234" textLength="26" lengthAdjust="spacingAndGlyphs" font-size="20">端板</text>
<text x="872" y="437" textLength="40" lengthAdjust="spacingAndGlyphs" font-size="20">压型钢板</text>
<text x="1015" y="425" font-size="24">≥50</text><text x="1105" y="425" font-size="24">≥50</text>
<text x="1268" y="388" textLength="90" lengthAdjust="spacingAndGlyphs" font-size="18">由设计师确定</text>
<text x="1238" y="445" textLength="182" lengthAdjust="spacingAndGlyphs" font-size="20">收边板（厚度由设计师确定）</text>
<text x="1393" y="347" font-size="18">30</text>
<text transform="translate(702 388) rotate(-90)" font-size="18" textLength="70" lengthAdjust="spacingAndGlyphs">按设计确定</text>
</g>
<rect x="85" y="586" width="245" height="6" fill="#eee"/>
<rect x="955" y="590" width="243" height="6" fill="#eee"/>
<g fill="#fff" style="stroke:#fff;stroke-width:.7">
<text x="655" y="80" textLength="603" lengthAdjust="spacingAndGlyphs" class="sf" font-size="36">说明: 1.混凝土板下弦钢YX-51-240-720(I)-1.0压型板</text>
<text x="720" y="132" textLength="597" lengthAdjust="spacingAndGlyphs" class="sf" font-size="36">2.栓钉沿梁间距240mm，直径φ19双面焊，栓钉高120mm</text>
<text x="720" y="184" textLength="315" lengthAdjust="spacingAndGlyphs" class="sf" font-size="36">3.压型钢板施工阶段设临时支撑。</text>
</g>
</g>

<!-- crosshair -->
<path stroke="#e8e8e8" stroke-width="1.3" fill="none" d="M33 1244H1671M1609.5 165V1291"/>
<rect x="1603.4" y="1238" width="12.4" height="12.4" fill="#000" stroke="#fff" stroke-width="1.4"/>

<!-- UCS -->
<g fill="none" stroke="#e8e8e8" stroke-width="1">
<path d="M59 1214V1259M64.5 1264H110M55.5 1259H64.5V1268H55.5zM61.5 1198L67.5 1204V1210M74 1198L67.5 1204M113.5 1250L126.5 1263M126.5 1250L113.5 1263"/>
</g>

<!-- viewcube -->
<g>
<circle cx="1588.3" cy="247.3" r="52.5" fill="none" stroke="#343434" stroke-width="15" opacity=".75"/>
<rect x="1562.3" y="221" width="51.4" height="51.3" fill="#a8a8a8" opacity=".92"/>
<rect x="1571.7" y="230.7" width="32.3" height="32" fill="#8e8e8e"/>
<g fill="#6e6e6e" font-size="18">
<text x="1587.7" y="198.5" text-anchor="middle">北</text><text x="1587.7" y="311" text-anchor="middle">南</text><text x="1532" y="254.5" text-anchor="middle" fill="#8a8a8a">西</text><text x="1644" y="254.5" text-anchor="middle">东</text>
</g>
<text x="1588" y="258" font-size="31" fill="#555" text-anchor="middle">上</text>
<rect x="1564" y="335" width="47.7" height="16.7" rx="5" fill="#6f7278"/>
<text x="1568" y="347.5" font-size="12" fill="#4a4d52">WCS</text>
<path fill="none" stroke="#4a4d52" d="M1599 341H1606L1602.5 346z"/>
</g>

<!-- history lines -->
<rect x="656.6" y="1206.7" width="106" height="14.6" rx="1" fill="#4c4c4c"/>
<text class="mn" x="658" y="1218" fill="#a8a8a8">命令: _textedit</text>
<rect x="656.6" y="1226" width="198.4" height="14.7" rx="1" fill="#4c4c4c"/>
<text class="mn" x="658" y="1237.5" fill="#b0b0b0">当前设置: 编辑模式 = Multiple</text>
<rect x="656.6" y="1246" width="270.6" height="14.7" rx="1" fill="#565656"/>
<text class="mn" x="658" y="1257.5" fill="#dcdcdc">选择注释对象或 [放弃(U)/模式(M)]: *取消*</text>

<!-- command line -->
<rect x="592.4" y="1264" width="58" height="27" rx="2" fill="#2a313d"/>
<path stroke="#a0a5ad" stroke-width="3" stroke-dasharray="1.3 1.3" d="M598 1268V1286"/>
<path fill="none" stroke="#c9ccd0" stroke-width="1.6" d="M609 1274L615 1284M615 1274L609 1284"/>
<path fill="#b8bcc2" d="M637 1271l4-3-1 5-5 5-7 8-3-2 7-8 3-6z"/>
<rect x="650" y="1265" width="461" height="25" fill="#aeaeae"/>
<rect x="654" y="1272" width="14" height="11" fill="none" stroke="#2a2a2a"/><path d="M654.5 1272.5h13v2h-13zM656 1277l2 1-2 1" fill="#2a2a2a" stroke="#2a2a2a" stroke-width=".5"/>
<path fill="#444" d="M671 1276h6l-3 4z"/>
<text x="687" y="1281" font-size="13" font-style="italic" fill="#7a7a7a">键入命令</text>
<path fill="#444" d="M1100 1280l3.5-5 3.5 5z"/>

<!-- ===== chrome ===== -->
<rect x="0" y="0" width="1707" height="79" fill="#232a35"/>
<rect x="0" y="79" width="1707" height="86" fill="#3b4453"/>
<rect x="0" y="165" width="33" height="1126" fill="#3b4453"/>
<rect x="1671" y="165" width="36" height="1126" fill="#3b4453"/>
<rect x="0" y="1291" width="1707" height="4" fill="#3b4453"/>
<rect x="0" y="1295" width="1707" height="60" fill="#262d39"/>
<rect x="0" y="52" width="1707" height="1" fill="#3d4554"/>

<!-- logo + QAT -->
<path fill="#a50f25" d="M15 7l5-2h18v19l-5 2H15z"/><path fill="#d8143a" d="M15 7H33V26H15z"/>
<text x="24" y="22" font-size="16" font-weight="bold" fill="#fff" text-anchor="middle">A</text>
<use href="#dnn" x="45.5" y="15"/>
<use href="#new" x="68.6" y="15.5"/><use href="#open" x="93" y="16"/><use href="#save" x="118" y="16"/><use href="#sas" x="141" y="16"/><use href="#pho" x="165.7" y="16"/><use href="#pho2" x="189" y="16"/><use href="#prt" x="213" y="16"/><use href="#und" x="237" y="15"/><use href="#dnn" x="254" y="15"/>
<g opacity=".45"><use href="#red" x="272.6" y="15"/><use href="#dnn" x="290" y="15"/></g>
<path fill="#c9ccd0" d="M301 11h8v1.5h-8zM301 14h8l-4 5z"/>
<path fill="#69b4ee" d="M318 17L338 7l-5 18-5-6-3 6v-7z"/>
<text x="338" y="20" font-size="12" fill="#a8d2f5">共享</text>
<text x="537.6" y="20" font-size="13" fill="#dfe3e8">Autodesk AutoCAD 2025</text>
<text x="696.7" y="20" font-size="13" fill="#dfe3e8" textLength="195" lengthAdjust="spacingAndGlyphs">北京某公交站办公楼结构设计图.dwg</text>
<path fill="#c9ccd0" d="M1065 12l4 4-4 4z"/>
<rect x="1075.7" y="6" width="178.3" height="20" fill="#414a5b"/>
<text x="1079.5" y="19.5" font-size="12" font-style="italic" fill="#98a0ad">键入关键字或短语</text>
<circle class="lw" cx="1266" cy="14" r="5"/><path fill="none" stroke="#d4a84c" stroke-width="1.4" d="M1270 18l4 4"/>
<circle class="f" cx="1291" cy="11" r="4.5"/><path class="f" d="M1283 23q0-7 8-7t8 7z"/>
<text x="1303.6" y="20" font-size="12.5" fill="#e4e6ea">登录</text>
<use href="#dnn" x="1391" y="16"/>
<path class="l" d="M1406 9h3l3 9h7l1-6h-10"/><circle class="f" cx="1413" cy="21" r="1.5"/><circle class="f" cx="1418" cy="21" r="1.5"/>
<path class="f" d="M1434 8h4l5 13h2v2h-6v-2h1l-1-3h-6l-1 3h1v2h-5v-2h2zM1433.5 15.5h5L1436 10z"/><use href="#dnn" x="1452" y="16"/>
<rect x="1465" y="7" width="1" height="18" fill="#555d6b"/>
<use href="#q" x="1482" y="16"/><use href="#dnn" x="1500" y="16"/>
<path class="lw" d="M1586 15h10M1633 11h8v10h-8zM1677 10l10 11M1687 10l-10 11"/>
<path fill="none" stroke="#ccc" stroke-width="1.4" d="M1618 41h9M1651 39h6v8h-6zM1653 39v-2h6v8h-2M1681 36l10 11M1691 36l-10 11"/>

<!-- menu -->
<text class="mu" x="18" y="47">文件(F)</text><text class="mu" x="80" y="47">编辑(E)</text><text class="mu" x="143" y="47">视图(V)</text><text class="mu" x="206.5" y="47">插入(I)</text><text class="mu" x="267" y="47">格式(O)</text><text class="mu" x="333" y="47">工具(T)</text><text class="mu" x="396" y="47">绘图(D)</text><text class="mu" x="461" y="47">标注(N)</text><text class="mu" x="527" y="47">修改(M)</text><text class="mu" x="595.5" y="47">参数(P)</text><text class="mu" x="658" y="47">窗口(W)</text><text class="mu" x="726.5" y="47">帮助(H)</text><text class="mu" x="791" y="47">Express</text>

<!-- tabs -->
<path fill="#e4e6ea" d="M19 60.5h18v2H19zM19 66h18v2H19zM19 71.5h18v2H19z"/>
<path stroke="#4b5362" d="M50 74L54 58"/>
<text x="62" y="72" font-size="12" fill="#c3cad5">开始</text>
<path fill="#3b4453" d="M94 79L101.5 55H312.7L304.5 79z"/>
<text x="110" y="72" font-size="12" font-weight="bold" fill="#eef0f3">北京某公交站办公楼结构设计图*</text>
<path stroke="#b0b5bd" stroke-width="1.5" d="M293 63l8 8M301 63l-8 8"/>
<path stroke="#e4e6ea" stroke-width="2" d="M329 60v14M322 67h14"/>
<path stroke="#4b5362" d="M347 76L352 59"/>

<!-- toolbars row 1 -->
<rect class="tb" x="4.5" y="83.5" width="645.5" height="23"/>
<rect class="tb" x="652.5" y="83.5" width="398" height="23"/>
<rect class="tb" x="1052.5" y="83.5" width="161" height="23"/>
<rect class="tb" x="1214.5" y="83.5" width="166" height="23"/>
<rect class="tb" x="1381.5" y="83.5" width="130" height="23"/>
<rect class="tb" x="1512.5" y="83.5" width="122" height="23"/>
<g stroke="#cfd3d8" stroke-width="2" stroke-dasharray="1 1.2" fill="none"><path d="M8 87V104M8 114V131M8 141V158M656 87V104M1056.5 87V104M651.5 114V131"/></g>
<g stroke="#5a6270"><path d="M85 86v18M182.6 86v18M303 86v18M382 86v18M480 86v18M624 86v18M108 113v18M205 113v18M327 113v18M424 113v18"/></g>
<use href="#new" x="23.6" y="95"/><use href="#open" x="46.6" y="95"/><use href="#save" x="69.7" y="95"/><use href="#prt" x="98.7" y="95"/><use href="#prv" x="122" y="95"/><use href="#pub" x="145" y="95"/><use href="#dwf" x="168" y="95"/>
<use href="#cut" x="197.5" y="95"/><use href="#cpy" x="219" y="95"/><use href="#pst" x="243" y="95"/><use href="#mat" x="267" y="95"/><use href="#mp" x="289" y="95"/>
<use href="#und" x="318" y="95"/><use href="#dn" x="335" y="95"/><use href="#red" x="354" y="95"/><use href="#dn" x="371" y="95"/>
<use href="#pan" x="395.5" y="95"/><use href="#zp" x="418.5" y="95"/><use href="#zw" x="441.6" y="95"/><use href="#zb" x="465" y="95"/>
<use href="#prop" x="494" y="95"/><use href="#dc" x="517" y="95"/><use href="#tp" x="540" y="95"/><use href="#ss" x="563" y="95"/><use href="#mk" x="586" y="95"/><use href="#calc" x="609" y="95"/><use href="#q" x="638" y="95"/>
<use href="#lyr" x="670" y="95"/>
<rect x="683" y="84.5" width="300" height="21" fill="#fff"/>
<ellipse cx="695" cy="92" rx="5" ry="6" fill="#f3b12c"/><rect x="693" y="98" width="4" height="4" fill="#f3b12c"/>
<circle cx="712" cy="94" r="4.5" fill="#f3a52c"/><path stroke="#f3a52c" stroke-width="1.3" d="M712 86v3M712 99v3M704 94h3M717 94h3M706 88l2 2M716 98l2 2M718 88l-2 2M708 98l-2 2"/>
<rect x="726" y="87" width="16" height="16" fill="none" stroke="#777" stroke-dasharray="4 8"/><rect x="730" y="90" width="6" height="7" fill="#888"/><circle cx="737" cy="99" r="3" fill="#f3a52c"/>
<rect x="748" y="94" width="9" height="8" fill="#f3a52c"/><path fill="none" stroke="#f3a52c" stroke-width="1.6" d="M754 94v-4a3 3 0 0 1 6 0v2"/>
<rect x="763.5" y="89" width="12" height="14" fill="#fff" stroke="#444"/>
<text x="782" y="100" font-size="12" fill="#111">0</text>
<use href="#chev" x="974" y="95"/>
<use href="#lyr" x="993.7" y="95"/><use href="#lyr" x="1017" y="95"/><use href="#lyr" x="1039.6" y="95"/>
<rect x="1062" y="84.5" width="150" height="21" fill="#fff"/>
<rect x="1066" y="88" width="13" height="14" fill="#fff" stroke="#444"/>
<text x="1084" y="100" font-size="12" fill="#111">ByLayer</text><use href="#chev" x="1203" y="95"/>
<rect x="1218" y="84.5" width="160" height="21" fill="#fff"/>
<rect x="1222.7" y="94.5" width="59" height="1.2" fill="#000"/>
<text x="1288" y="100" font-size="12" fill="#111">ByLayer</text><use href="#chev" x="1369" y="95"/>
<rect x="1384" y="84.5" width="125.6" height="21" fill="#fff"/>
<rect x="1389" y="94.5" width="35" height="1.2" fill="#000"/>
<text x="1429" y="100" font-size="12" fill="#111">ByLayer</text><use href="#chev" x="1499" y="95"/>
<rect x="1515" y="84.5" width="119" height="21" fill="#f2f2f2"/>
<text x="1525" y="99" font-size="12" fill="#8a8a8a">ByColor</text><use href="#chev" x="1625" y="95"/>

<!-- toolbars row 2 -->
<rect class="tb" x="4.5" y="110.5" width="498" height="23"/>
<rect class="tb" x="502.5" y="110.5" width="144" height="23"/>
<rect class="tb" x="648.5" y="110.5" width="485.5" height="23"/>
<g stroke="#5a6270"><path d="M727 113v18M918 113v18M1017 113v18"/></g>
<use href="#d1" x="24.7" y="122"/><use href="#d2" x="46.6" y="122"/><use href="#d3" x="70" y="122"/><use href="#d4" x="93" y="122"/>
<use href="#d5" x="122" y="122"/><use href="#d6" x="145" y="122"/><use href="#d7" x="167" y="122"/><use href="#d8" x="190" y="122"/>
<use href="#d9" x="220" y="122"/><use href="#d10" x="243" y="122"/><use href="#d11" x="266" y="122"/><use href="#d12" x="289" y="122"/><use href="#d13" x="311.6" y="122"/>
<use href="#d14" x="341" y="122"/><use href="#d15" x="363.7" y="122"/><use href="#d16" x="386.7" y="122"/><use href="#d17" x="410" y="122"/>
<use href="#d18" x="439" y="122"/><use href="#d19" x="462.4" y="122"/><use href="#d20" x="485" y="122"/>
<rect x="503.6" y="111" width="119.4" height="22" fill="#fff"/>
<text x="522" y="128" font-size="12.5" fill="#111">Standard</text><use href="#chev" x="613" y="122"/>
<use href="#d21" x="634" y="122"/>
<use href="#m1" x="666.5" y="122"/><use href="#m2" x="690" y="122"/><use href="#m3" x="713" y="122"/>
<use href="#m4" x="741.6" y="122"/><use href="#m5" x="765" y="122"/><use href="#m6" x="788" y="122"/><use href="#m7" x="812" y="122"/><use href="#m8" x="834" y="122"/><use href="#m9" x="858" y="122"/><use href="#m10" x="880" y="122"/><use href="#m11" x="903.5" y="122"/>
<use href="#m12" x="932" y="122"/><use href="#m13" x="955" y="122"/><use href="#m14" x="978" y="122"/><use href="#m15" x="1001" y="122"/>
<use href="#m16" x="1030" y="122"/><use href="#m17" x="1053" y="122"/><use href="#m18" x="1075.7" y="122"/><use href="#m19" x="1098.6" y="122"/><use href="#m20" x="1122" y="122"/>

<!-- row 3 -->
<rect class="tb" x="4.5" y="137.5" width="77.5" height="24"/>
<g transform="translate(23.6 149)"><rect class="w" x="-8" y="-3" width="14" height="11"/><path class="o" d="M0 1L6-9l3 2-6 10z"/><path class="rd" d="M-2 3l2-2 3 2z"/></g>
<g transform="translate(46.6 149)"><rect class="w" x="-8" y="-3" width="15" height="11"/><path class="gn" d="M-3-7l2-1 2 3 4-5 2 1-6 8z"/></g>
<g transform="translate(70 149)"><path class="f" d="M-8-1L3-8l5 2L-3 1zM-8 3L3-4l5 2L-3 5z"/><rect class="rd" x="1" y="1" width="7" height="8"/></g>

<!-- left toolbar -->
<rect class="tb" x="5" y="165" width="24" height="448"/>
<path stroke="#cfd3d8" stroke-width="2" stroke-dasharray="1 1.2" d="M8 169H21"/>
<use href="#l1" x="16" y="185"/><use href="#l2" x="16" y="206.7"/><use href="#l3" x="16" y="228.3"/><use href="#l4" x="16" y="250.7"/><use href="#l5" x="16" y="272.7"/><use href="#l6" x="16" y="295"/><use href="#l7" x="16" y="316.7"/><use href="#l8" x="16" y="339.3"/><use href="#l9" x="16" y="361"/><use href="#l10" x="16" y="382.3"/><use href="#l11" x="16" y="404"/><use href="#l12" x="16" y="426.7"/><use href="#l13" x="16" y="448.3"/><use href="#l14" x="16" y="470.7"/><use href="#l15" x="16" y="492.3"/><use href="#l16" x="16" y="514.3"/><use href="#l17" x="16" y="536.7"/><use href="#l18" x="16" y="558.7"/><use href="#l19" x="16" y="581.7"/><use href="#l20" x="16" y="602.7"/>

<!-- right toolbar -->
<rect class="tb" x="1675" y="165" width="25" height="404"/>
<path stroke="#cfd3d8" stroke-width="2" stroke-dasharray="1 1.2" d="M1679 169H1692"/>
<use href="#r1" x="1687" y="185"/><use href="#r2" x="1687" y="206.7"/><use href="#r3" x="1687" y="229.3"/><use href="#r4" x="1687" y="250.7"/><use href="#r5" x="1687" y="273.3"/><use href="#r6" x="1687" y="294.3"/><use href="#r7" x="1687" y="317.3"/><use href="#r8" x="1687" y="339.3"/><use href="#r9" x="1687" y="361"/><use href="#r10" x="1687" y="383.3"/><use href="#r11" x="1687" y="405"/><use href="#r12" x="1687" y="427.3"/><use href="#r13" x="1687" y="448.7"/><use href="#r14" x="1687" y="471.7"/><use href="#r15" x="1687" y="493.3"/><use href="#r16" x="1687" y="515"/><use href="#r17" x="1687" y="536.7"/><use href="#r18" x="1687" y="559.3"/>

<!-- bottom tabs -->
<path fill="#e4e6ea" d="M19 1301h18v2H19zM19 1306h18v2H19zM19 1311h18v2H19z"/>
<path fill="#3b4453" d="M45.5 1319L55 1295H102.6L93 1319z"/>
<text x="62" y="1311" font-size="12" font-weight="bold" fill="#eef0f3">模型</text>
<text x="110" y="1311" font-size="12" fill="#d6dae0">布局1</text>
<path stroke="#4b5362" d="M150 1316L155 1300M193 1316L198 1300"/>
<path stroke="#e4e6ea" stroke-width="2" d="M173.4 1300v14M166.4 1307h14"/>

<!-- status bar -->
<g fill="#3b4453">
<rect x="6" y="1325" width="483" height="24"/><rect x="493" y="1325" width="140.6" height="24"/><rect x="637" y="1325" width="29" height="24"/><rect x="669" y="1325" width="64.4" height="24"/><rect x="736" y="1325" width="154" height="24"/><rect x="892" y="1325" width="63.5" height="24"/><rect x="957" y="1325" width="22" height="24"/><rect x="981" y="1325" width="24" height="24"/><rect x="1007" y="1325" width="23" height="24"/><rect x="1032" y="1325" width="39" height="24"/><rect x="1074" y="1325" width="104" height="24"/><rect x="1181" y="1325" width="145.5" height="24"/><rect x="1329" y="1325" width="40" height="24"/><rect x="1371" y="1325" width="24" height="24"/><rect x="1398" y="1325" width="96" height="24"/><rect x="1496" y="1325" width="24" height="24"/><rect x="1522" y="1325" width="41" height="24"/><rect x="1565" y="1325" width="24" height="24"/><rect x="1591" y="1325" width="25" height="24"/><rect x="1618" y="1325" width="30" height="24"/><rect x="1651" y="1325" width="23.6" height="24"/><rect x="1677" y="1325" width="24" height="24"/>
</g>
<g fill="#5c8cc0">
<rect x="762" y="1325" width="22" height="24"/><rect x="786.6" y="1325" width="22" height="24"/><rect x="916.7" y="1325" width="20.7" height="24"/><rect x="982" y="1325" width="22" height="24"/><rect x="1075" y="1325" width="22" height="24"/><rect x="1139" y="1325" width="22" height="24"/><rect x="1181.7" y="1325" width="22" height="24"/><rect x="1592.6" y="1325" width="21.4" height="24"/>
</g>
<text x="536" y="1341" font-size="12" fill="#e4e6ea" textLength="92" lengthAdjust="spacingAndGlyphs">-4389, 156964, 0</text>
<text x="640" y="1341" font-size="12" fill="#e4e6ea">模型</text>
<path fill="none" stroke="#eee" stroke-width="1" d="M673 1337h14M673 1332h14M673 1342h14M676 1329v16M680 1329v16M684 1329v16"/>
<path stroke="#ddd" stroke-width="2" stroke-dasharray="2 3" d="M699 1331h13M699 1337h13M699 1343h13"/>
<use href="#dnn" x="725" y="1337"/>
<path class="f" d="M740 1338h8v8h-8z"/><path class="lw" d="M748 1338v-8h7v7h-7"/>
<path fill="none" stroke="#eee" stroke-width="1.5" d="M768 1329v10M763 1334h10"/><rect class="w" x="771" y="1339" width="10" height="5"/>
<path class="lw" d="M791 1329v16h15M795 1329v12h10"/>
<circle class="l" cx="820" cy="1338" r="6"/><path fill="none" stroke="#eee" d="M820 1338l7-7M820 1338h7"/><use href="#dnn" x="842" y="1337"/>
<path stroke="#e2574c" d="M856 1329l9 16"/><path stroke="#5fd38a" d="M861 1329v16"/><use href="#dnn" x="882" y="1337"/>
<path fill="none" stroke="#eee" d="M895 1345l15-13M895 1345h15"/>
<rect x="922" y="1331" width="11" height="14" fill="none" stroke="#fff" stroke-width="1.3"/><rect x="918" y="1328" width="5" height="5" fill="#5c8cc0" stroke="#fff"/><use href="#dnn" x="947" y="1337"/>
<path class="f" d="M960 1330h16v2.5h-16zM960 1335h12v2.5h-12zM960 1340h8v4h-8zM970 1340h6v2h-6z"/>
<rect x="985" y="1328" width="15" height="18" fill="#fff"/><path fill="#5c8cc0" d="M985 1328h3v3h-3zM991 1328h3v3h-3zM997 1328h3v3h-3zM988 1331h3v3h-3zM994 1331h3v3h-3zM985 1334h3v3h-3zM991 1334h3v3h-3zM997 1334h3v3h-3zM988 1337h3v3h-3zM994 1337h3v3h-3zM985 1340h3v3h-3zM991 1340h3v3h-3zM997 1340h3v3h-3z"/>
<rect x="1014" y="1335" width="10" height="11" class="gn"/><path fill="none" stroke="#eee" d="M1010 1329h6M1013 1327v6"/>
<path class="l" d="M1036 1337l4-5h9v10l-4 3h-9zM1036 1337h9v8M1045 1337l4-5"/><rect x="1034" y="1343" width="4" height="4" fill="none" stroke="#f3a52c"/><use href="#dnn" x="1062.6" y="1337"/>
<path fill="none" stroke="#eee" stroke-width="1.2" d="M1079 1329v15h14M1079 1329l-2 3M1079 1329l2 3M1083 1332l3 4h-3l3 4"/>
<rect x="1105" y="1330" width="12" height="14" fill="none" stroke="#c9ccd0" stroke-dasharray="3 1"/><path class="bl" d="M1103 1328h4v4h-4zM1115 1328h4v4h-4zM1103 1342h4v4h-4zM1115 1342h4v4h-4z"/><use href="#dnn" x="1130" y="1337"/>
<path fill="none" stroke="#eee" stroke-width="1.2" d="M1150 1329l-7 13h14zM1150 1333v6"/><circle cx="1150" cy="1343" r="2.5" fill="none" stroke="#fff"/><use href="#dnn" x="1170" y="1337"/>
<path class="w" d="M1192.6 1328l2 8 6 10h-3l-5-7-5 7h-3l6-10z"/>
<path class="f" d="M1217 1328l2 8 6 10h-3l-5-7-5 7h-3l6-10z"/><path class="f" d="M1240.7 1328l2 8 6 10h-3l-5-7-5 7h-3l6-10z"/>
<text x="1257" y="1341" font-size="12" fill="#e4e6ea" textLength="53" lengthAdjust="spacingAndGlyphs">1:1 / 100%</text>
<use href="#dnn" x="1319" y="1337"/>
<circle cx="1341" cy="1337" r="4.5" fill="none" stroke="#d0d0d0" stroke-width="3.5"/><path fill="none" stroke="#eee" stroke-width="2" d="M1341 1329v3M1341 1342v3M1333 1337h3M1346 1337h3M1335 1331l2 2M1345 1341l2 2M1347 1331l-2 2M1337 1341l-2 2"/><use href="#dnn" x="1362" y="1337"/>
<path fill="none" stroke="#eee" stroke-width="1.8" d="M1383 1329v16M1375 1337h16"/>
<rect x="1405" y="1328" width="8" height="18" class="f"/><path stroke="#3b4453" d="M1409 1331h4M1409 1335h4M1409 1339h4M1409 1343h4"/>
<text x="1427.6" y="1341" font-size="12" fill="#e4e6ea">小数</text><use href="#dnn" x="1486.6" y="1337"/>
<rect x="1503" y="1329" width="11" height="16" fill="none" stroke="#ccc" stroke-width="1.3"/><path class="l" d="M1505 1333h7M1505 1337h7M1505 1341h7"/>
<path class="l" d="M1527 1345v-15h14v8M1527 1333h14"/><rect class="f" x="1534" y="1340" width="5" height="5"/><use href="#dnn" x="1555" y="1337"/>
<rect class="l" x="1569" y="1329" width="5" height="5"/><circle class="l" cx="1580" cy="1332" r="2.5"/><path class="l" d="M1575 1339l-3 6h6z"/>
<circle cx="1603" cy="1337" r="8" fill="none" stroke="#d0e0f0" stroke-width="1.3"/><path class="lw" d="M1599 1341l8-8"/>
<rect x="1623" y="1328" width="13" height="16" fill="#2f6fc0"/><path class="w" d="M1629 1328v8h-6v1h6v-1h6"/><rect class="o" x="1623" y="1337" width="8" height="7"/><path class="gn" d="M1633 1342l2-1 1 2 3-4 1 1-4 5z"/>
<rect x="1655" y="1330" width="15" height="14" fill="none" stroke="#ccc"/><path fill="none" stroke="#eee" d="M1658 1341l3-3M1667 1333l-3 3"/>
<path fill="#e4e6ea" d="M1680 1329h18v2.2h-18zM1680 1336h18v2.2h-18zM1680 1343h18v2.2h-18z"/>

<!-- window border -->
<path fill="none" stroke="#0a84c8" stroke-width="2" d="M1 0V1354H1706V0M0 1H1707"/>
</svg>
</body></html>
